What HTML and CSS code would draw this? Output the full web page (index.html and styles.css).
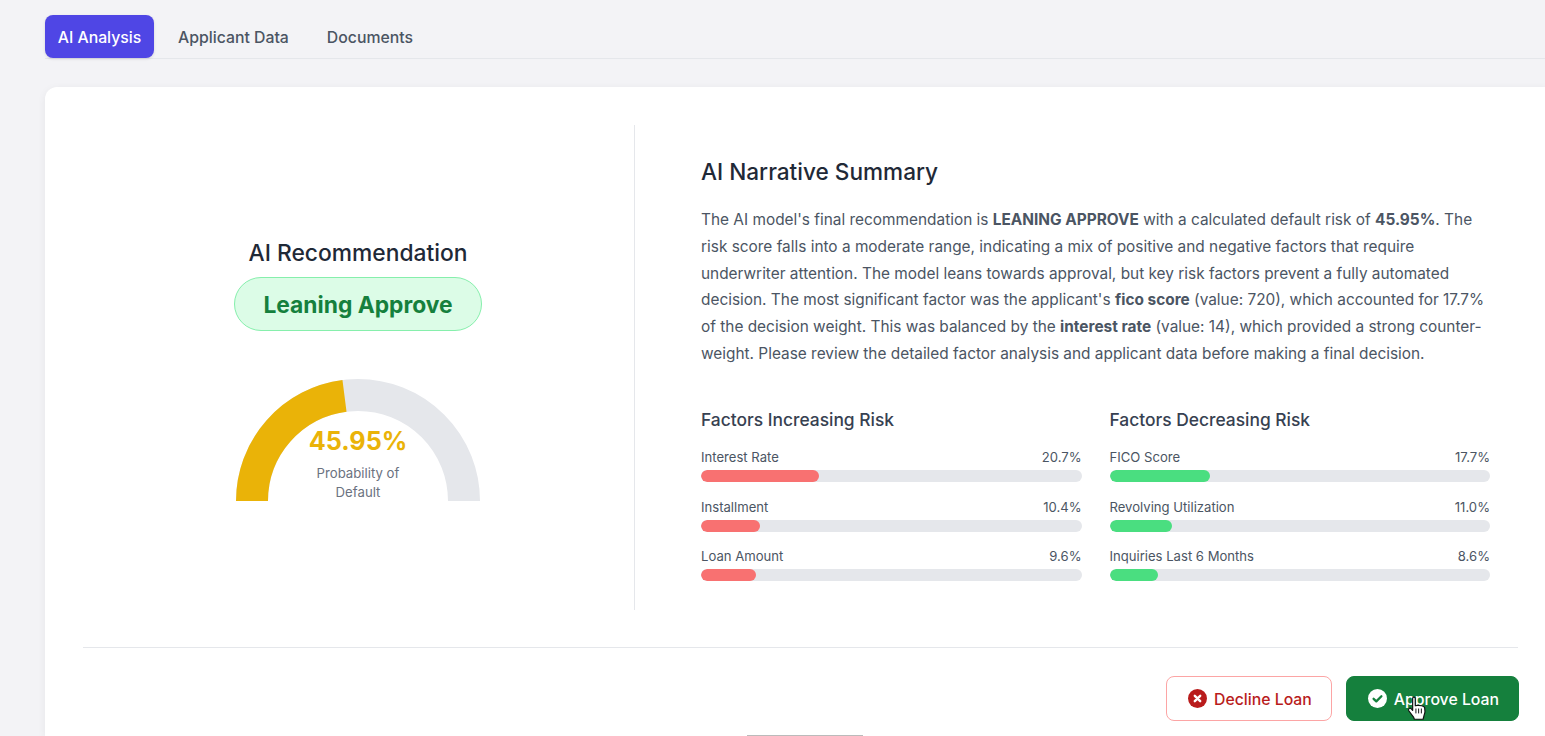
FILE: index.html
```html
<!doctype html>
<html lang="en">
<head>
    <meta charset="UTF-8">
    <title>Loan Review</title>
    <link rel="stylesheet" href="styles.css">
</head>

<body>
<div class="page">
    <div class="tabs">
        <button class="tab active">AI Analysis</button>
        <button class="tab">Applicant Data</button>
        <button class="tab">Documents</button>
    </div>

    <div class="card">
        <div class="analysis">
            <div class="rec">
                <h2 class="rec-title">AI Recommendation</h2>
                <div class="rec-pill">Leaning Approve</div>
                <div class="gauge">
                    <svg width="244" height="122" viewBox="0 0 244 122">
                        <path d="M16 122A106 106 0 0 1 228 122" fill="none" stroke="#e5e7eb" stroke-width="32"/>
                        <path d="M16 122A106 106 0 0 1 108.5 16.9" fill="none" stroke="#eab308" stroke-width="32"/>
                    </svg>
                    <div class="gauge-label">
                        <div class="gauge-value">45.95%</div>
                        <div class="gauge-text">Probability of<br>Default</div>
                    </div>
                </div>
            </div>

            <div class="summary">
                <h2 class="summary-title">AI Narrative Summary</h2>
                <p class="summary-text">The AI model's final recommendation is <b>LEANING APPROVE</b> with a calculated default risk of <b>45.95%</b>. The risk score falls into a moderate range, indicating a mix of positive and negative factors that require underwriter attention. The model leans towards approval, but key risk factors prevent a fully automated decision. The most significant factor was the applicant's <b>fico score</b> (value: 720), which accounted for 17.7% of the decision weight. This was balanced by the <b>interest rate</b> (value: 14), which provided a strong counter-weight. Please review the detailed factor analysis and applicant data before making a final decision.</p>

                <div class="factors">
                    <div class="factor-col">
                        <h3 class="factor-title">Factors Increasing Risk</h3>
                        <div class="factor">
                            <div class="factor-row"><span>Interest Rate</span><span>20.7%</span></div>
                            <div class="bar"><div class="fill red" style="width: 31%"></div></div>
                        </div>
                        <div class="factor">
                            <div class="factor-row"><span>Installment</span><span>10.4%</span></div>
                            <div class="bar"><div class="fill red" style="width: 15.5%"></div></div>
                        </div>
                        <div class="factor">
                            <div class="factor-row"><span>Loan Amount</span><span>9.6%</span></div>
                            <div class="bar"><div class="fill red" style="width: 14.4%"></div></div>
                        </div>
                    </div>
                    <div class="factor-col">
                        <h3 class="factor-title">Factors Decreasing Risk</h3>
                        <div class="factor">
                            <div class="factor-row"><span>FICO Score</span><span>17.7%</span></div>
                            <div class="bar"><div class="fill green" style="width: 26.4%"></div></div>
                        </div>
                        <div class="factor">
                            <div class="factor-row"><span>Revolving Utilization</span><span>11.0%</span></div>
                            <div class="bar"><div class="fill green" style="width: 16.4%"></div></div>
                        </div>
                        <div class="factor">
                            <div class="factor-row"><span>Inquiries Last 6 Months</span><span>8.6%</span></div>
                            <div class="bar"><div class="fill green" style="width: 12.8%"></div></div>
                        </div>
                    </div>
                </div>
            </div>
        </div>

        <div class="actions">
            <button class="btn btn-decline">
                <svg width="19" height="19" viewBox="0 0 19 19">
                    <circle cx="9.5" cy="9.5" r="9.5" fill="#b91c1c"/>
                    <path d="M6.8 6.8L12.2 12.2M12.2 6.8L6.8 12.2" stroke="#fff" stroke-width="2.4" stroke-linecap="round"/>
                </svg>
                Decline Loan
            </button>
            <button class="btn btn-approve">
                <svg width="19" height="19" viewBox="0 0 19 19">
                    <circle cx="9.5" cy="9.5" r="9.5" fill="#fff"/>
                    <path d="M5.6 9.8L8.3 12.4L13.4 7.2" fill="none" stroke="#15803d" stroke-width="2.3" stroke-linecap="round" stroke-linejoin="round"/>
                </svg>
                Approve Loan
                <svg class="hand" width="20" height="25" viewBox="0 0 18 23">
                    <path d="M5 2.2C5 .6 7.4 .6 7.4 2.2V9L9.6 8.6C11.4 8.4 15.6 9.2 16 10.6C16.6 13 16.4 16 15.4 18.2L14.6 21.4H6.6L5.8 19.4L1.6 13.8C.4 12 2.2 10.4 3.8 11.8L5 13.2Z" fill="#fff" stroke="#111" stroke-width="1.1" stroke-linejoin="round"/>
                    <path d="M8 11.5V16M10.5 11.5V16M13 11.5V16" stroke="#111" stroke-width=".9"/>
                </svg>
            </button>
        </div>

        <div class="next-edge"></div>
    </div>
</div>
</body>
</html>
```

FILE: styles.css
```css
* {
    padding: 0;
    margin: 0;
    box-sizing: border-box;
}

html, body {
    height: 736px;
    overflow: hidden;
}

body {
    background: #f3f3f6;
    font-family: Inter, "Noto Sans", sans-serif;
    color: #4b5563;
}

.page {
    width: 1511px;
    margin-left: 45px;
    padding-top: 15px;
}

.tabs {
    display: flex;
    gap: 10px;
    height: 44px;
    border-bottom: 1px solid #e5e7eb;
}

.tab {
    height: 43px;
    padding: 2px 14px 0;
    border: 0;
    border-radius: 8px;
    background: none;
    font: 500 15.8px Inter, sans-serif;
    color: #4b5563;
}

.tab.active {
    width: 109px;
    padding: 2px 0 0;
    background: #4f46e5;
    color: #fff;
    box-shadow: 0 1px 3px rgba(0, 0, 0, 0.12);
}

.card {
    margin-top: 28px;
    height: 649px;
    padding: 38px 38px 0;
    background: #fff;
    border-radius: 12px 12px 0 0;
    box-shadow: 0 2px 8px rgba(0, 0, 0, 0.06);
}

.analysis {
    display: flex;
    height: 485px;
}

.rec {
    width: 552px;
    border-right: 1px solid #e5e7eb;
    display: flex;
    flex-direction: column;
    align-items: center;
    justify-content: center;
    padding: 4px 1px 0 0;
}

.rec-title {
    font-size: 22.8px;
    line-height: 30px;
    font-weight: 500;
    color: #1f2937;
}

.rec-pill {
    margin-top: 9px;
    width: 248px;
    height: 54px;
    line-height: 54px;
    text-align: center;
    background: #dcfce7;
    border: 1px solid #86efac;
    border-radius: 27px;
    font-size: 22.8px;
    font-weight: 700;
    color: #15803d;
}

.gauge {
    position: relative;
    margin-top: 48px;
    width: 244px;
    height: 122px;
}

.gauge svg {
    display: block;
}

.gauge-label {
    position: absolute;
    left: 0;
    right: 0;
    top: 45px;
    text-align: center;
}

.gauge-value {
    font-size: 25.2px;
    line-height: 34px;
    font-weight: 700;
    color: #eab308;
}

.gauge-text {
    margin-top: 6px;
    font-size: 13.2px;
    line-height: 19px;
    color: #6b7280;
}

.summary {
    width: 855px;
    padding-left: 66px;
}

.summary-title {
    margin-top: 31px;
    font-size: 22.6px;
    line-height: 32px;
    font-weight: 500;
    color: #1f2937;
}

.summary-text {
    margin-top: 19px;
    font-size: 15.4px;
    line-height: 26.8px;
}

.summary-text b {
    font-weight: 700;
}

.factors {
    display: grid;
    grid-template-columns: 1fr 1fr;
    gap: 28px;
    margin-top: 39px;
}

.factor-title {
    font-size: 17.4px;
    line-height: 26px;
    font-weight: 500;
    color: #374151;
    margin-bottom: 15px;
}

.factor {
    margin-bottom: 15.8px;
}

.factor-row {
    display: flex;
    justify-content: space-between;
    font-size: 13.1px;
    line-height: 18px;
}

.bar {
    height: 12px;
    margin-top: 4px;
    border-radius: 6px;
    background: #e5e7eb;
    overflow: hidden;
}

.fill {
    height: 100%;
    border-radius: 6px;
}

.fill.red {
    background: #f87171;
}

.fill.green {
    background: #4ade80;
}

.actions {
    display: flex;
    justify-content: flex-end;
    gap: 14px;
    margin-top: 37px;
    padding-top: 28px;
    border-top: 1px solid #e5e7eb;
}

.btn {
    display: flex;
    align-items: center;
    gap: 7px;
    height: 45px;
    padding: 2px 19px 0 21px;
    border-radius: 8px;
    font: 500 15.8px Inter, sans-serif;
    position: relative;
}

.btn svg {
    margin-top: -2px;
}

.btn-decline {
    background: #fff;
    border: 1px solid #fca5a5;
    color: #b91c1c;
}

.btn-approve {
    margin-right: -1px;
    background: #15803d;
    border: 1px solid #15803d;
    color: #fff;
}

.hand {
    position: absolute;
    left: 60px;
    top: 21px;
}

.next-edge {
    width: 116px;
    height: 1px;
    margin: 14px 0 0 664px;
    background: #bbb;
}
```
